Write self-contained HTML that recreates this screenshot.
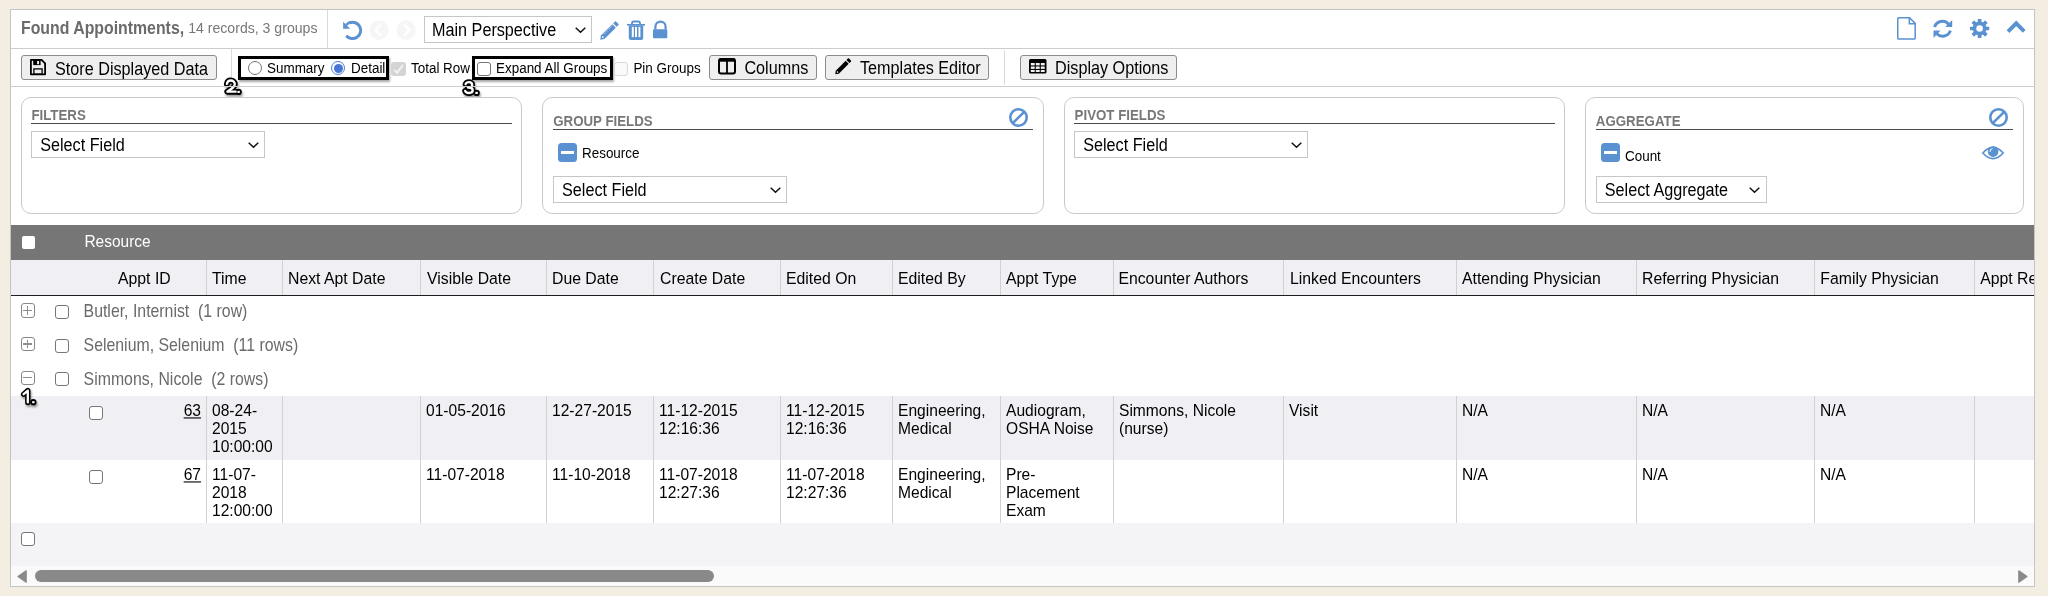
<!DOCTYPE html>
<html><head><meta charset="utf-8">
<style>
*{box-sizing:border-box;margin:0;padding:0}
html,body{width:2048px;height:596px;overflow:hidden;background:#f4ede1;font-family:"Liberation Sans",sans-serif;color:#000}
.a{position:absolute}
svg{position:absolute;overflow:visible}
#panel{position:absolute;left:10px;top:9px;width:2025px;height:578px;background:#fff;border:1px solid #c4c4c4}
.t{position:absolute;white-space:nowrap;line-height:1;transform:scaleY(1.1);transform-origin:0 84.65%}
.btn{position:absolute;background:#efefef;border:1px solid #8c8c8c;border-radius:3px}
.sel{position:absolute;background:#fff;border:1px solid #c6c6c6}
.box{position:absolute;border:1px solid #c9c9c9;border-radius:10px;top:97px;height:117px;background:#fff}
.hd{position:absolute;font-weight:bold;font-size:13.3px;color:#777;line-height:1;white-space:nowrap;transform:scaleY(1.1);transform-origin:0 84.65%}
.ul{position:absolute;height:1.3px;background:#4a4a4a}
.cb{position:absolute;width:14px;height:14px;border:1px solid #767676;border-radius:3px;background:#fff}
.vl{position:absolute;width:1px;background:#d0d0d0}
.ct{position:absolute;font-size:15.6px;line-height:16.136px;white-space:nowrap;transform:scaleY(1.1);transform-origin:0 0}
.bl{position:absolute;border:3px solid #000;box-shadow:1px 2px 2px rgba(0,0,0,.35)}
.blue{fill:#5a91d0}
</style></head><body>
<div id="panel"></div>
<div class="t" style="left:21px;top:21.3px;font-size:15.85px;font-weight:bold;color:#6b6b6b">Found Appointments,</div>
<div class="t" style="left:188.2px;top:21.4px;font-size:14.1px;color:#777">14 records, 3 groups</div>
<div class="a" style="left:327px;top:10px;width:1px;height:38px;background:#dadada"></div>
<svg style="left:340px;top:18px" width="26" height="26" viewBox="0 0 26 26"><path d="M9.56 4.74 A8.2 8.2 0 1 1 6.22 17.67" fill="none" stroke="#5a91d0" stroke-width="3"/><path d="M3.1 3.8 L3.1 10.8 L10.1 10.8 Z" fill="#5a91d0"/><path d="M6 7 L10 4" stroke="#5a91d0" stroke-width="2.5"/></svg>
<svg style="left:369.4px;top:20.4px" width="20" height="20" viewBox="0 0 20 20"><circle cx="10" cy="10" r="9.7" fill="#f6f6f6"/><path d="M12 4.5 L6.5 10 L12 15.5" fill="none" stroke="#fff" stroke-width="2.4"/></svg>
<svg style="left:396.2px;top:20.4px" width="20" height="20" viewBox="0 0 20 20"><circle cx="10" cy="10" r="9.7" fill="#f6f6f6"/><path d="M8 4.5 L13.5 10 L8 15.5" fill="none" stroke="#fff" stroke-width="2.4"/></svg>
<div class="sel" style="left:424px;top:16px;width:168px;height:27px"></div>
<div class="t" style="left:432px;top:22.2px;font-size:16.2px;">Main Perspective</div>
<svg style="left:575px;top:27px" width="11" height="6" viewBox="0 0 11 6"><path d="M0.7 0.7 L5.5 5.2 L10.3 0.7" fill="none" stroke="#111" stroke-width="1.5"/></svg>
<svg style="left:600px;top:21px" width="19" height="19" viewBox="0 0 19 19"><path d="M0.3 18.7 L0.9 14.6 L12.3 3.2 L15.8 6.7 L4.4 18.1 Z" fill="#5a91d0"/><path d="M13.2 2.3 L14.8 0.7 Q15.5 0 16.2 0.7 L18.3 2.8 Q19 3.5 18.3 4.2 L16.7 5.8 Z" fill="#5a91d0"/><path d="M2.2 15.5 L3.5 16.8" stroke="#fff" stroke-width="1.3"/><path d="M3.6 13.2 L12.6 4.2" stroke="#fff" stroke-width="0.6" stroke-dasharray="1.2 0.6"/></svg>
<svg style="left:627px;top:21px" width="18" height="19" viewBox="0 0 18 19"><path d="M5 3.5 V2.2 Q5 0.5 6.7 0.5 H11.3 Q13 0.5 13 2.2 V3.5" fill="none" stroke="#5a91d0" stroke-width="1.8"/><rect x="0" y="3" width="18" height="1.6" fill="#5a91d0"/><path d="M1.8 4.5 H16.2 V17 Q16.2 19 14.2 19 H3.8 Q1.8 19 1.8 17 Z" fill="#5a91d0"/><rect x="4.8" y="5.9" width="2" height="10.2" fill="#fff"/><rect x="8" y="5.9" width="2" height="10.2" fill="#fff"/><rect x="11.5" y="5.9" width="1.9" height="10.2" fill="#fff"/></svg>
<svg style="left:652.7px;top:21px" width="15" height="18" viewBox="0 0 15 18"><path d="M2.4 8.5 V5.7 A5.1 5.1 0 0 1 12.6 5.7 V8.5" fill="none" stroke="#5a91d0" stroke-width="2.2"/><rect x="0" y="8.3" width="14.3" height="9" rx="0.8" fill="#5a91d0"/></svg>
<svg style="left:1897px;top:17px" width="19" height="23" viewBox="0 0 19 23"><path d="M0.75 1.5 Q0.75 0.75 1.5 0.75 H12.5 L18.2 6.4 V21.3 Q18.2 22 17.5 22 H1.5 Q0.75 22 0.75 21.3 Z" fill="none" stroke="#5a91d0" stroke-width="1.5"/><path d="M12.3 0.75 V6.8 H18.2" fill="none" stroke="#5a91d0" stroke-width="1.5"/></svg>
<svg style="left:1933px;top:18.5px" width="20" height="20" viewBox="0 0 20 20"><path d="M1.6 8.1 A8.2 8.2 0 0 1 15.6 5.2" fill="none" stroke="#5a91d0" stroke-width="3"/><path d="M19.2 1 V8.1 H12.3 Z" fill="#5a91d0"/><path d="M17.4 11.6 A8.2 8.2 0 0 1 3.6 14.6" fill="none" stroke="#5a91d0" stroke-width="3"/><path d="M0.5 18.9 V11.6 H7.5 Z" fill="#5a91d0"/></svg>
<svg style="left:1970px;top:19px" width="19" height="19" viewBox="0 0 19 19"><g fill="#5a91d0"><rect x="7.75" y="-0.1" width="3.7" height="6" rx="0.6" transform="rotate(0 9.6 9.5)"/><rect x="7.75" y="-0.1" width="3.7" height="6" rx="0.6" transform="rotate(45 9.6 9.5)"/><rect x="7.75" y="-0.1" width="3.7" height="6" rx="0.6" transform="rotate(90 9.6 9.5)"/><rect x="7.75" y="-0.1" width="3.7" height="6" rx="0.6" transform="rotate(135 9.6 9.5)"/><rect x="7.75" y="-0.1" width="3.7" height="6" rx="0.6" transform="rotate(180 9.6 9.5)"/><rect x="7.75" y="-0.1" width="3.7" height="6" rx="0.6" transform="rotate(225 9.6 9.5)"/><rect x="7.75" y="-0.1" width="3.7" height="6" rx="0.6" transform="rotate(270 9.6 9.5)"/><rect x="7.75" y="-0.1" width="3.7" height="6" rx="0.6" transform="rotate(315 9.6 9.5)"/><circle cx="9.6" cy="9.5" r="6.9"/></g><circle cx="9.6" cy="9.5" r="3.3" fill="#fff"/></svg>
<svg style="left:2006px;top:20.5px" width="20" height="13" viewBox="0 0 20 13"><path d="M2 10.6 L10.2 2.3 L18.2 10.3" fill="none" stroke="#5a91d0" stroke-width="3.8" stroke-linejoin="miter"/></svg>
<div class="a" style="left:11px;top:48px;width:2023px;height:1px;background:#cdcdcd"></div>
<div class="btn" style="left:21px;top:55px;width:196px;height:25px"></div>
<svg style="left:30px;top:58.5px" width="16" height="16.5" viewBox="0 0 16 16.5"><path d="M0.9 0.9 H11.6 L15.1 4.4 V15.3 H0.9 Z" fill="none" stroke="#000" stroke-width="1.8" stroke-linejoin="round"/><rect x="3.2" y="0.9" width="7.4" height="5.2" fill="#000"/><rect x="7.1" y="2" width="1.9" height="3.2" fill="#f4f4f4"/><rect x="3.9" y="9.9" width="8.2" height="5.3" fill="none" stroke="#000" stroke-width="1.3"/></svg>
<div class="t" style="left:55px;top:60.5px;font-size:16.2px;">Store Displayed Data</div>
<div class="a" style="left:231px;top:49px;width:1px;height:29px;background:#dadada"></div>
<div class="bl" style="left:238px;top:56px;width:151px;height:24px"></div>
<div class="a" style="left:247.7px;top:61.3px;width:14px;height:14px;border-radius:50%;border:1px solid #777;background:#fff"></div>
<div class="t" style="left:267px;top:61.8px;font-size:13.45px;">Summary</div>
<div class="a" style="left:331px;top:61.3px;width:14px;height:14px;border-radius:50%;border:1px solid #4c7fdc;background:#fff"></div>
<div class="a" style="left:333.5px;top:63.8px;width:9px;height:9px;border-radius:50%;background:#4a76d4"></div>
<div class="t" style="left:351px;top:61.8px;font-size:13.45px;">Detail</div>
<svg style="left:0;top:0" width="600" height="110" viewBox="0 0 600 110"><defs><filter id="sh2" x="-50%" y="-50%" width="200%" height="200%"><feGaussianBlur in="SourceAlpha" stdDeviation="1"/><feOffset dx="0.5" dy="2"/><feComponentTransfer><feFuncA type="linear" slope="0.4"/></feComponentTransfer><feMerge><feMergeNode/><feMergeNode in="SourceGraphic"/></feMerge></filter></defs><g filter="url(#sh2)" stroke-linecap="round" stroke-linejoin="round" fill="none"><path d="M226.9 83.9 C227.3 81.6 229 80.5 230.8 80.5 C233.1 80.5 234.8 82.1 234.8 84.2 C234.8 86.7 232.2 88.4 227.3 91.7 H235.7" stroke="#000" stroke-width="5.9"/><path d="M238.6 91.9 h0.1" stroke="#000" stroke-width="6.2"/><path d="M226.9 83.9 C227.3 81.6 229 80.5 230.8 80.5 C233.1 80.5 234.8 82.1 234.8 84.2 C234.8 86.7 232.2 88.4 227.3 91.7 H235.7" stroke="#fff" stroke-width="2.3"/><path d="M238.4 91.9 h0.4" stroke="#fff" stroke-width="2.1" stroke-linecap="square"/></g></svg>
<div class="a" style="left:391px;top:61.7px;width:14.5px;height:14px;border-radius:3px;background:#d4d4d4"></div>
<svg style="left:391px;top:61.7px" width="14" height="14" viewBox="0 0 14 14"><path d="M3 7.8 L6.1 10.7 L12 3" fill="none" stroke="#f2f2f2" stroke-width="2"/></svg>
<div class="t" style="left:411px;top:61.8px;font-size:13.45px;">Total Row</div>
<div class="bl" style="left:472px;top:56px;width:141px;height:24px"></div>
<div class="cb" style="left:477px;top:62px;width:14px;height:14px"></div>
<div class="t" style="left:496px;top:61.8px;font-size:13.45px;">Expand All Groups</div>
<svg style="left:0;top:0" width="600" height="110" viewBox="0 0 600 110"><defs><filter id="sh3" x="-50%" y="-50%" width="200%" height="200%"><feGaussianBlur in="SourceAlpha" stdDeviation="1"/><feOffset dx="0.5" dy="2"/><feComponentTransfer><feFuncA type="linear" slope="0.4"/></feComponentTransfer><feMerge><feMergeNode/><feMergeNode in="SourceGraphic"/></feMerge></filter></defs><g filter="url(#sh3)" stroke-linecap="round" stroke-linejoin="round" fill="none"><path d="M465.6 84.2 C466.1 82.9 467.3 82.2 468.9 82.2 C470.9 82.2 472.2 83.3 472.2 84.9 C472.2 86.5 470.9 87.5 468.9 87.5 H467.9 M468.9 87.5 C471.2 87.5 472.7 88.6 472.7 90.3 C472.7 92 471.1 93 468.9 93 C467.1 93 465.8 92.2 465.2 90.9" stroke="#000" stroke-width="5.9"/><path d="M476.6 92.9 h0.1" stroke="#000" stroke-width="6.2"/><path d="M465.6 84.2 C466.1 82.9 467.3 82.2 468.9 82.2 C470.9 82.2 472.2 83.3 472.2 84.9 C472.2 86.5 470.9 87.5 468.9 87.5 H467.9 M468.9 87.5 C471.2 87.5 472.7 88.6 472.7 90.3 C472.7 92 471.1 93 468.9 93 C467.1 93 465.8 92.2 465.2 90.9" stroke="#fff" stroke-width="2.3"/><path d="M476.40000000000003 92.9 h0.4" stroke="#fff" stroke-width="2.1" stroke-linecap="square"/></g></svg>
<div class="a" style="left:613.9px;top:62px;width:14px;height:14px;border:1px solid #d9d9d9;border-radius:3px;background:#fafafa"></div>
<div class="t" style="left:633.4px;top:61.8px;font-size:13.45px;">Pin Groups</div>
<div class="btn" style="left:709px;top:54.5px;width:108px;height:25px"></div>
<svg style="left:718px;top:58px" width="18" height="16" viewBox="0 0 18 16"><rect x="1" y="1" width="16" height="14.5" rx="2" fill="none" stroke="#000" stroke-width="2"/><rect x="1" y="0.5" width="16" height="3.2" fill="#000"/><rect x="8.1" y="1" width="1.8" height="14" fill="#000"/></svg>
<div class="t" style="left:744.4px;top:59.5px;font-size:16.2px;">Columns</div>
<div class="btn" style="left:825px;top:54.5px;width:164px;height:25px"></div>
<svg style="left:834.5px;top:58px" width="16.5" height="16.5" viewBox="0 0 19 19"><path d="M0.3 18.7 L0.9 14.6 L12.3 3.2 L15.8 6.7 L4.4 18.1 Z" fill="#000"/><path d="M13.2 2.3 L14.8 0.7 Q15.5 0 16.2 0.7 L18.3 2.8 Q19 3.5 18.3 4.2 L16.7 5.8 Z" fill="#000"/><path d="M2.2 15.5 L3.5 16.8" stroke="#efefef" stroke-width="1.4"/></svg>
<div class="t" style="left:860px;top:59.5px;font-size:16.2px;">Templates Editor</div>
<div class="a" style="left:1004px;top:50px;width:1px;height:35px;background:#dadada"></div>
<div class="btn" style="left:1020px;top:55px;width:157px;height:25px"></div>
<svg style="left:1029px;top:58.7px" width="17.5" height="14.5" viewBox="0 0 17.5 14.5"><rect x="0" y="0" width="17.5" height="14.5" rx="1.6" fill="#000"/><g fill="#f2f2f2"><rect x="1.8" y="4" width="3.9" height="2.4"/><rect x="6.8" y="4" width="3.9" height="2.4"/><rect x="11.8" y="4" width="3.9" height="2.4"/><rect x="1.8" y="7.5" width="3.9" height="2.4"/><rect x="6.8" y="7.5" width="3.9" height="2.4"/><rect x="11.8" y="7.5" width="3.9" height="2.4"/><rect x="1.8" y="11" width="3.9" height="2"/><rect x="6.8" y="11" width="3.9" height="2"/><rect x="11.8" y="11" width="3.9" height="2"/></g></svg>
<div class="t" style="left:1055px;top:60.2px;font-size:16.2px;">Display Options</div>
<div class="a" style="left:11px;top:86px;width:2023px;height:1px;background:#cdcdcd"></div>
<div class="box" style="left:21px;width:501px"></div>
<div class="hd" style="left:31.4px;top:109.3px">FILTERS</div>
<div class="ul" style="left:31px;top:122.6px;width:481px"></div>
<div class="sel" style="left:31px;top:131px;width:234px;height:27px"></div>
<div class="t" style="left:40.2px;top:137.1px;font-size:16.2px;">Select Field</div>
<svg style="left:248px;top:142px" width="11" height="6" viewBox="0 0 11 6"><path d="M0.7 0.7 L5.5 5.2 L10.3 0.7" fill="none" stroke="#111" stroke-width="1.5"/></svg>
<div class="box" style="left:542px;width:502px"></div>
<div class="hd" style="left:553.2px;top:115px">GROUP FIELDS</div>
<div class="ul" style="left:553px;top:128.8px;width:480px"></div>
<svg style="left:1009.1px;top:108.4px" width="19" height="19" viewBox="0 0 19 19"><circle cx="9.5" cy="9.5" r="8.2" fill="none" stroke="#5a91d0" stroke-width="2.6"/><path d="M3.8 15.2 L15.2 3.8" stroke="#5a91d0" stroke-width="2.6"/></svg>
<div class="a" style="left:558px;top:143px;width:19px;height:19px;border-radius:3.5px;background:#5a91d0"></div>
<div class="a" style="left:561.1px;top:151px;width:12.7px;height:3.1px;background:#fff"></div>
<div class="t" style="left:582px;top:147.4px;font-size:13.45px;">Resource</div>
<div class="sel" style="left:553px;top:176px;width:234px;height:27px"></div>
<div class="t" style="left:562px;top:182.1px;font-size:16.2px;">Select Field</div>
<svg style="left:770px;top:187px" width="11" height="6" viewBox="0 0 11 6"><path d="M0.7 0.7 L5.5 5.2 L10.3 0.7" fill="none" stroke="#111" stroke-width="1.5"/></svg>
<div class="box" style="left:1064px;width:501px"></div>
<div class="hd" style="left:1074.6px;top:109.3px">PIVOT FIELDS</div>
<div class="ul" style="left:1074px;top:122.6px;width:481px"></div>
<div class="sel" style="left:1074px;top:131px;width:234px;height:27px"></div>
<div class="t" style="left:1083.2px;top:137.1px;font-size:16.2px;">Select Field</div>
<svg style="left:1291px;top:142px" width="11" height="6" viewBox="0 0 11 6"><path d="M0.7 0.7 L5.5 5.2 L10.3 0.7" fill="none" stroke="#111" stroke-width="1.5"/></svg>
<div class="box" style="left:1585px;width:439px"></div>
<div class="hd" style="left:1595.8px;top:115px">AGGREGATE</div>
<div class="ul" style="left:1596px;top:128.8px;width:417px"></div>
<svg style="left:1989.2px;top:108.4px" width="19" height="19" viewBox="0 0 19 19"><circle cx="9.5" cy="9.5" r="8.2" fill="none" stroke="#5a91d0" stroke-width="2.6"/><path d="M3.8 15.2 L15.2 3.8" stroke="#5a91d0" stroke-width="2.6"/></svg>
<div class="a" style="left:1601px;top:143px;width:19px;height:19px;border-radius:3.5px;background:#5a91d0"></div>
<div class="a" style="left:1604.1px;top:151px;width:12.7px;height:3.1px;background:#fff"></div>
<div class="t" style="left:1625px;top:150.3px;font-size:13.45px;">Count</div>
<svg style="left:1981.5px;top:146px" width="22" height="14" viewBox="0 0 22 14"><path d="M0.8 7 Q11 -4.2 21.2 7 Q11 18.2 0.8 7 Z" fill="none" stroke="#5a91d0" stroke-width="1.6"/><circle cx="11.1" cy="5.6" r="5.3" fill="#5a91d0"/><path d="M8 6 A3 3 0 0 1 10.5 2.6" fill="none" stroke="#fff" stroke-width="1"/></svg>
<div class="sel" style="left:1596px;top:176px;width:171px;height:27px"></div>
<div class="t" style="left:1604.8px;top:182.1px;font-size:16.2px;">Select Aggregate</div>
<svg style="left:1749px;top:187px" width="11" height="6" viewBox="0 0 11 6"><path d="M0.7 0.7 L5.5 5.2 L10.3 0.7" fill="none" stroke="#111" stroke-width="1.5"/></svg>
<div class="a" style="left:11px;top:225px;width:2023px;height:35.6px;background:#767676"></div>
<div class="a" style="left:22px;top:236px;width:12.5px;height:12.5px;border-radius:2px;background:#fff"></div>
<div class="t" style="left:84.4px;top:234.4px;font-size:15.5px;color:#fff">Resource</div>
<div class="a" style="left:11px;top:260px;width:2023px;height:35px;background:#efeff4"></div>
<div class="a" style="left:11px;top:295px;width:2023px;height:1.2px;background:#1e1e1e"></div>
<div class="vl" style="left:206px;top:260px;height:35px"></div>
<div class="vl" style="left:282px;top:260px;height:35px"></div>
<div class="vl" style="left:420px;top:260px;height:35px"></div>
<div class="vl" style="left:546px;top:260px;height:35px"></div>
<div class="vl" style="left:653px;top:260px;height:35px"></div>
<div class="vl" style="left:780px;top:260px;height:35px"></div>
<div class="vl" style="left:892px;top:260px;height:35px"></div>
<div class="vl" style="left:1000px;top:260px;height:35px"></div>
<div class="vl" style="left:1113px;top:260px;height:35px"></div>
<div class="vl" style="left:1283px;top:260px;height:35px"></div>
<div class="vl" style="left:1456px;top:260px;height:35px"></div>
<div class="vl" style="left:1636px;top:260px;height:35px"></div>
<div class="vl" style="left:1814px;top:260px;height:35px"></div>
<div class="vl" style="left:1974px;top:260px;height:35px"></div>
<div class="t" style="left:118px;top:270.5px;font-size:15.8px;">Appt ID</div>
<div class="t" style="left:212px;top:270.5px;font-size:15.8px;">Time</div>
<div class="t" style="left:288px;top:270.5px;font-size:15.8px;">Next Apt Date</div>
<div class="t" style="left:427px;top:270.5px;font-size:15.8px;">Visible Date</div>
<div class="t" style="left:552px;top:270.5px;font-size:15.8px;">Due Date</div>
<div class="t" style="left:660px;top:270.5px;font-size:15.8px;">Create Date</div>
<div class="t" style="left:786px;top:270.5px;font-size:15.8px;">Edited On</div>
<div class="t" style="left:898px;top:270.5px;font-size:15.8px;">Edited By</div>
<div class="t" style="left:1006px;top:270.5px;font-size:15.8px;">Appt Type</div>
<div class="t" style="left:1118.4px;top:270.5px;font-size:15.8px;">Encounter Authors</div>
<div class="t" style="left:1290px;top:270.5px;font-size:15.8px;">Linked Encounters</div>
<div class="t" style="left:1462px;top:270.5px;font-size:15.8px;">Attending Physician</div>
<div class="t" style="left:1642px;top:270.5px;font-size:15.8px;">Referring Physician</div>
<div class="t" style="left:1820.3px;top:270.5px;font-size:15.8px;">Family Physician</div>
<div class="t" style="left:1980.2px;top:270.5px;font-size:15.8px;">Appt Re</div>
<div class="a" style="left:21px;top:303.2px;width:14.2px;height:14.4px;border:1.2px solid #888;border-radius:3px;background:#fff"></div>
<div class="a" style="left:23.2px;top:309.7px;width:9.2px;height:1.2px;background:#8e8e8e"></div>
<div class="a" style="left:27.2px;top:306.0px;width:1.2px;height:8.8px;background:#8e8e8e"></div>
<div class="cb" style="left:54.8px;top:305.0px"></div>
<div class="t" style="left:83.6px;top:304.2px;font-size:15.85px;color:#6a6a6a">Butler, Internist&nbsp; (1 row)</div>
<div class="a" style="left:21px;top:336.9px;width:14.2px;height:14.4px;border:1.2px solid #888;border-radius:3px;background:#fff"></div>
<div class="a" style="left:23.2px;top:343.4px;width:9.2px;height:1.2px;background:#8e8e8e"></div>
<div class="a" style="left:27.2px;top:339.7px;width:1.2px;height:8.8px;background:#8e8e8e"></div>
<div class="cb" style="left:54.8px;top:338.7px"></div>
<div class="t" style="left:83.6px;top:337.9px;font-size:15.85px;color:#6a6a6a">Selenium, Selenium&nbsp; (11 rows)</div>
<div class="a" style="left:21px;top:370.6px;width:14.2px;height:14.4px;border:1.2px solid #888;border-radius:3px;background:#fff"></div>
<div class="a" style="left:23.2px;top:377.1px;width:9.2px;height:1.2px;background:#8e8e8e"></div>
<div class="cb" style="left:54.8px;top:372.40000000000003px"></div>
<div class="t" style="left:83.6px;top:371.6px;font-size:15.85px;color:#6a6a6a">Simmons, Nicole&nbsp; (2 rows)</div>
<div class="a" style="left:11px;top:396px;width:2023px;height:64px;background:#f0f0f4"></div>
<div class="vl" style="left:206px;top:396px;height:64px"></div>
<div class="vl" style="left:282px;top:396px;height:64px"></div>
<div class="vl" style="left:420px;top:396px;height:64px"></div>
<div class="vl" style="left:546px;top:396px;height:64px"></div>
<div class="vl" style="left:653px;top:396px;height:64px"></div>
<div class="vl" style="left:780px;top:396px;height:64px"></div>
<div class="vl" style="left:892px;top:396px;height:64px"></div>
<div class="vl" style="left:1000px;top:396px;height:64px"></div>
<div class="vl" style="left:1113px;top:396px;height:64px"></div>
<div class="vl" style="left:1283px;top:396px;height:64px"></div>
<div class="vl" style="left:1456px;top:396px;height:64px"></div>
<div class="vl" style="left:1636px;top:396px;height:64px"></div>
<div class="vl" style="left:1814px;top:396px;height:64px"></div>
<div class="vl" style="left:1974px;top:396px;height:64px"></div>
<div class="cb" style="left:88.8px;top:405.8px"></div>
<div class="ct" style="left:100px;width:101px;text-align:right;top:402.0px;text-decoration:underline">63</div>
<div class="ct" style="left:212px;top:402.0px">08-24-<br>2015<br>10:00:00</div>
<div class="ct" style="left:426px;top:402.0px">01-05-2016</div>
<div class="ct" style="left:552px;top:402.0px">12-27-2015</div>
<div class="ct" style="left:659px;top:402.0px">11-12-2015<br>12:16:36</div>
<div class="ct" style="left:786px;top:402.0px">11-12-2015<br>12:16:36</div>
<div class="ct" style="left:898px;top:402.0px">Engineering,<br>Medical</div>
<div class="ct" style="left:1006px;top:402.0px">Audiogram,<br>OSHA Noise</div>
<div class="ct" style="left:1119px;top:402.0px">Simmons, Nicole<br>(nurse)</div>
<div class="ct" style="left:1289px;top:402.0px">Visit</div>
<div class="ct" style="left:1462px;top:402.0px">N/A</div>
<div class="ct" style="left:1642px;top:402.0px">N/A</div>
<div class="ct" style="left:1820px;top:402.0px">N/A</div>
<div class="a" style="left:11px;top:460px;width:2023px;height:63px;background:#ffffff"></div>
<div class="vl" style="left:206px;top:460px;height:63px"></div>
<div class="vl" style="left:282px;top:460px;height:63px"></div>
<div class="vl" style="left:420px;top:460px;height:63px"></div>
<div class="vl" style="left:546px;top:460px;height:63px"></div>
<div class="vl" style="left:653px;top:460px;height:63px"></div>
<div class="vl" style="left:780px;top:460px;height:63px"></div>
<div class="vl" style="left:892px;top:460px;height:63px"></div>
<div class="vl" style="left:1000px;top:460px;height:63px"></div>
<div class="vl" style="left:1113px;top:460px;height:63px"></div>
<div class="vl" style="left:1283px;top:460px;height:63px"></div>
<div class="vl" style="left:1456px;top:460px;height:63px"></div>
<div class="vl" style="left:1636px;top:460px;height:63px"></div>
<div class="vl" style="left:1814px;top:460px;height:63px"></div>
<div class="vl" style="left:1974px;top:460px;height:63px"></div>
<div class="cb" style="left:88.8px;top:469.8px"></div>
<div class="ct" style="left:100px;width:101px;text-align:right;top:465.7px;text-decoration:underline">67</div>
<div class="ct" style="left:212px;top:465.7px">11-07-<br>2018<br>12:00:00</div>
<div class="ct" style="left:426px;top:465.7px">11-07-2018</div>
<div class="ct" style="left:552px;top:465.7px">11-10-2018</div>
<div class="ct" style="left:659px;top:465.7px">11-07-2018<br>12:27:36</div>
<div class="ct" style="left:786px;top:465.7px">11-07-2018<br>12:27:36</div>
<div class="ct" style="left:898px;top:465.7px">Engineering,<br>Medical</div>
<div class="ct" style="left:1006px;top:465.7px">Pre-<br>Placement<br>Exam</div>
<div class="ct" style="left:1462px;top:465.7px">N/A</div>
<div class="ct" style="left:1642px;top:465.7px">N/A</div>
<div class="ct" style="left:1820px;top:465.7px">N/A</div>
<div class="a" style="left:11px;top:523px;width:2023px;height:43px;background:#f4f4f6"></div>
<div class="cb" style="left:21px;top:532px"></div>
<div class="a" style="left:11px;top:566px;width:2023px;height:20px;background:#fafafa"></div>
<svg style="left:16.5px;top:570px" width="10" height="13" viewBox="0 0 10 13"><path d="M9.2 0.8 L1 6.5 L9.2 12.2 Z" fill="#8a8a8a" stroke="#8a8a8a" stroke-width="1.2" stroke-linejoin="round"/></svg>
<div class="a" style="left:35px;top:570.3px;width:679px;height:11.5px;border-radius:6px;background:#898989"></div>
<svg style="left:2017.5px;top:570px" width="10" height="13" viewBox="0 0 10 13"><path d="M0.8 0.8 L9 6.5 L0.8 12.2 Z" fill="#8a8a8a" stroke="#8a8a8a" stroke-width="1.2" stroke-linejoin="round"/></svg>
<div class="a" style="left:2035px;top:0;width:13px;height:596px;background:#f4ede1"></div>
<div class="a" style="left:2034px;top:9px;width:1px;height:578px;background:#c4c4c4"></div>
<svg style="left:14px;top:384px" width="26" height="26" viewBox="14 384 26 26"><defs><filter id="sh1" x="-50%" y="-50%" width="200%" height="200%"><feGaussianBlur in="SourceAlpha" stdDeviation="1"/><feOffset dx="0.5" dy="2"/><feComponentTransfer><feFuncA type="linear" slope="0.4"/></feComponentTransfer><feMerge><feMergeNode/><feMergeNode in="SourceGraphic"/></feMerge></filter></defs><g filter="url(#sh1)" stroke-linecap="round" stroke-linejoin="round" fill="none"><path d="M23.6 394.2 L27.8 390.6 V402.4" stroke="#000" stroke-width="5.4"/><path d="M33.3 402.2 h0.1" stroke="#000" stroke-width="6.2"/><path d="M23.6 394.2 L27.8 390.6 V402.4" stroke="#fff" stroke-width="2.3"/><path d="M33.2 402.2 h0.3" stroke="#fff" stroke-width="2.1" stroke-linecap="square"/></g></svg>
</body></html>
